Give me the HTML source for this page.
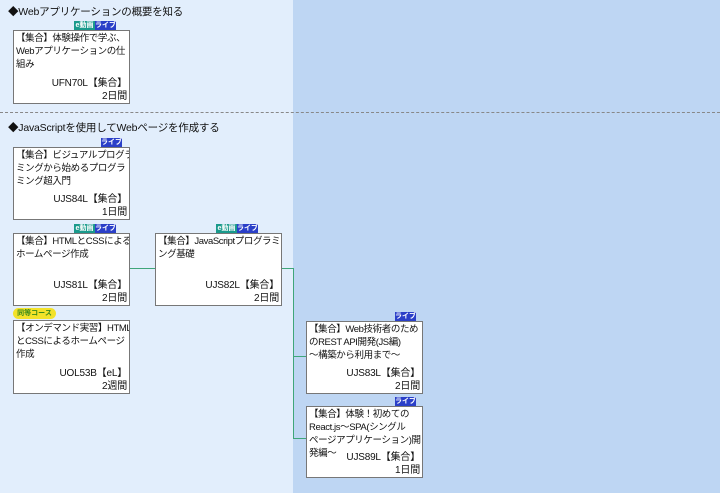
<!DOCTYPE html>
<html><head><meta charset="utf-8"><style>
*{margin:0;padding:0;box-sizing:border-box}
body{width:720px;height:493px;position:relative;overflow:hidden;background:#bed6f3;font-family:"Liberation Sans","Noto Sans CJK JP",sans-serif;color:#111}
.left{position:absolute;left:0;top:0;width:293px;height:493px;background:#e2eefc}
.dash{position:absolute;left:0;width:720px;top:112px;border-top:1px dashed #888}
.h{position:absolute;left:8px;font-size:10.5px;line-height:14px;letter-spacing:-0.2px}
.box{position:absolute;background:#fff;border:1px solid #777;font-size:9.5px;line-height:13px;padding:1px 1px 1px 2px;letter-spacing:-0.4px;white-space:nowrap;overflow:hidden}
.box .f{position:absolute;right:2px;bottom:0;text-align:right;line-height:13px;font-size:10px;letter-spacing:-0.2px}
.b{position:absolute;height:9px;font-size:7px;line-height:9px;color:#fff;text-align:center;font-weight:bold}
.e{background:#1a9a8c}.l{background:#2a3fc8}
.g{position:absolute;background:#3fa67a}
.y{position:absolute;background:#f3e22a;border-radius:6px;font-size:7px;line-height:11px;color:#3a8a1a;text-align:center;font-weight:bold}
</style></head><body>
<div class="left"></div>
<div class="dash"></div>
<div class="h" style="top:5px">◆Webアプリケーションの概要を知る</div>
<div class="h" style="top:121px">◆JavaScriptを使用してWebページを作成する</div>

<div class="b e" style="left:74px;top:21px;width:21px">e動画</div><div class="b l" style="left:95px;top:21px;width:21px">ライブ</div>
<div class="box" style="left:13px;top:30px;width:117px;height:74px">【集合】体験操作で学ぶ、<br>Webアプリケーションの仕<br>組み<div class="f">UFN70L【集合】<br>2日間</div></div>

<div class="b l" style="left:101px;top:138px;width:21px">ライブ</div>
<div class="box" style="left:13px;top:147px;width:117px;height:73px">【集合】ビジュアルプログラ<br>ミングから始めるプログラ<br>ミング超入門<div class="f">UJS84L【集合】<br>1日間</div></div>

<div class="b e" style="left:74px;top:224px;width:21px">e動画</div><div class="b l" style="left:95px;top:224px;width:21px">ライブ</div>
<div class="box" style="left:13px;top:233px;width:117px;height:73px">【集合】HTMLとCSSによる<br>ホームページ作成<div class="f">UJS81L【集合】<br>2日間</div></div>

<div class="b e" style="left:216px;top:224px;width:21px">e動画</div><div class="b l" style="left:237px;top:224px;width:21px">ライブ</div>
<div class="box" style="left:155px;top:233px;width:127px;height:73px">【集合】JavaScriptプログラミ<br>ング基礎<div class="f">UJS82L【集合】<br>2日間</div></div>

<div class="y" style="left:13px;top:308px;width:43px;height:11px">同等コース</div>
<div class="box" style="left:13px;top:320px;width:117px;height:74px">【オンデマンド実習】HTML<br>とCSSによるホームページ<br>作成<div class="f">UOL53B【eL】<br>2週間</div></div>

<div class="b l" style="left:395px;top:312px;width:21px">ライブ</div>
<div class="box" style="left:306px;top:321px;width:117px;height:73px">【集合】Web技術者のため<br>のREST API開発(JS編)<br>〜構築から利用まで〜<div class="f">UJS83L【集合】<br>2日間</div></div>

<div class="b l" style="left:395px;top:397px;width:21px">ライブ</div>
<div class="box" style="left:306px;top:406px;width:117px;height:72px">【集合】体験！初めての<br>React.js〜SPA(シングル<br>ページアプリケーション)開<br>発編〜<div class="f">UJS89L【集合】<br>1日間</div></div>

<div class="g" style="left:130px;top:268px;width:25px;height:1px"></div>
<div class="g" style="left:282px;top:268px;width:12px;height:1px"></div>
<div class="g" style="left:293px;top:268px;width:1px;height:171px"></div>
<div class="g" style="left:293px;top:356px;width:13px;height:1px"></div>
<div class="g" style="left:293px;top:438px;width:13px;height:1px"></div>
</body></html>
